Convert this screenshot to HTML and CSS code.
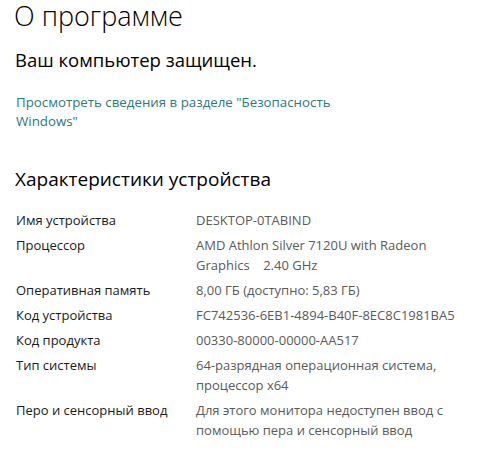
FILE: index.html
```html
<!DOCTYPE html>
<html lang="ru">
<head>
<meta charset="utf-8">
<link rel="stylesheet" href="styles.css">
</head>
<body>
<main class="page">
  <h1 class="title">О программе</h1>
  <p class="status">Ваш компьютер защищен.</p>
  <a class="link" href="#">Просмотреть сведения в разделе "Безопасность Windows"</a>
  <h2 class="section">Характеристики устройства</h2>
  <dl class="specs">
    <div class="row"><dt>Имя устройства</dt><dd>DESKTOP-0TABIND</dd></div>
    <div class="row"><dt>Процессор</dt><dd>AMD Athlon Silver 7120U with Radeon Graphics&nbsp;&nbsp;&nbsp;&nbsp;2.40 GHz</dd></div>
    <div class="row"><dt>Оперативная память</dt><dd>8,00 ГБ (доступно: 5,83 ГБ)</dd></div>
    <div class="row"><dt>Код устройства</dt><dd>FC742536-6EB1-4894-B40F-8EC8C1981BA5</dd></div>
    <div class="row"><dt>Код продукта</dt><dd>00330-80000-00000-AA517</dd></div>
    <div class="row"><dt>Тип системы</dt><dd>64-разрядная операционная система, процессор x64</dd></div>
    <div class="row"><dt>Перо и сенсорный ввод</dt><dd>Для этого монитора недоступен ввод с помощью пера и сенсорный ввод</dd></div>
  </dl>
</main>
</body>
</html>
```

FILE: styles.css
```css
html, body {
  margin: 0;
  padding: 0;
  background: #ffffff;
}
body {
  font-family: "Open Sans", "Noto Sans", sans-serif;
  color: #000000;
}
.page {
  padding: 0 0 0 14px;
  display: flex;
  flex-direction: column;
  align-items: flex-start;
}
.title {
  margin: 0;
  font-size: 27px;
  font-weight: 300;
  line-height: 32px;
}
.status {
  margin: 16px 0 0 1px;
  font-size: 18.5px;
  font-weight: 400;
  line-height: 24px;
}
.link {
  margin: 21px 0 0 2px;
  width: 322px;
  font-size: 13.3px;
  line-height: 19px;
  color: #2b7b79;
  text-decoration: none;
}
.section {
  margin: 35px 0 0 1px;
  font-size: 19px;
  font-weight: 400;
  line-height: 26px;
}
.specs {
  margin: 18px 0 0 2px;
  display: flex;
  flex-direction: column;
  gap: 5px;
  font-size: 13px;
  line-height: 20px;
}
.row {
  display: grid;
  grid-template-columns: 180px 268px;
}
.row dt {
  margin: 0;
  color: #1a1a1a;
}
.row dd {
  margin: 0;
  color: #5a5a5a;
}
```
